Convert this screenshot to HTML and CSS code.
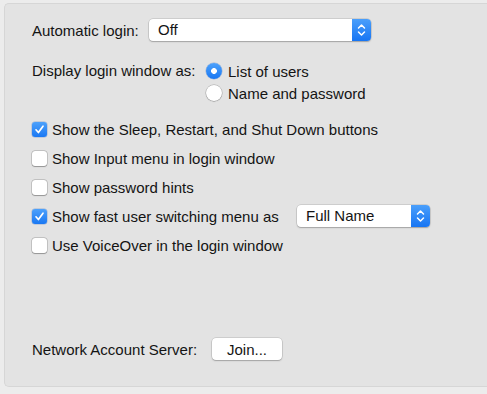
FILE: index.html
```html
<!DOCTYPE html>
<html lang="en">
<head>
    <meta charset="UTF-8">
    <meta name="viewport" content="width=device-width, initial-scale=1.0">
    <title>Login Options</title>
    <link rel="stylesheet" href="styles.css">
</head>
<body>

<div class="panel">
    <div class="row">
        <span class="label label-auto">Automatic login:</span>
        <div class="popup popup-wide">
            <span class="popup-text">Off</span>
            <span class="popup-arrows">
                <svg width="19" height="22" viewBox="0 0 19 22"><path d="M6.5 9 L9.5 6 L12.5 9 M6.5 13 L9.5 16 L12.5 13" fill="none" stroke="#fff" stroke-width="1.5" stroke-linecap="round" stroke-linejoin="round"/></svg>
            </span>
        </div>
    </div>

    <div class="row radio-block">
        <span class="label label-display">Display login window as:</span>
        <div class="radio-list">
            <div class="radio-row">
                <span class="radio radio-on"></span>
                <span>List of users</span>
            </div>
            <div class="radio-row">
                <span class="radio"></span>
                <span>Name and password</span>
            </div>
        </div>
    </div>

    <div class="checks">
        <div class="check-row">
            <span class="check check-on"><svg width="15" height="15" viewBox="0 0 15 15"><path d="M4 7.8 L6.4 10.5 L11 4.2" fill="none" stroke="#fff" stroke-width="1.7" stroke-linecap="round" stroke-linejoin="round"/></svg></span>
            <span>Show the Sleep, Restart, and Shut Down buttons</span>
        </div>
        <div class="check-row">
            <span class="check"></span>
            <span>Show Input menu in login window</span>
        </div>
        <div class="check-row">
            <span class="check"></span>
            <span>Show password hints</span>
        </div>
        <div class="check-row">
            <span class="check check-on"><svg width="15" height="15" viewBox="0 0 15 15"><path d="M4 7.8 L6.4 10.5 L11 4.2" fill="none" stroke="#fff" stroke-width="1.7" stroke-linecap="round" stroke-linejoin="round"/></svg></span>
            <span class="label-fast">Show fast user switching menu as</span>
            <div class="popup popup-name">
                <span class="popup-text">Full Name</span>
                <span class="popup-arrows">
                    <svg width="19" height="22" viewBox="0 0 19 22"><path d="M6.5 9 L9.5 6 L12.5 9 M6.5 13 L9.5 16 L12.5 13" fill="none" stroke="#fff" stroke-width="1.5" stroke-linecap="round" stroke-linejoin="round"/></svg>
                </span>
            </div>
        </div>
        <div class="check-row">
            <span class="check"></span>
            <span>Use VoiceOver in the login window</span>
        </div>
    </div>

    <div class="row network">
        <span class="label label-network">Network Account Server:</span>
        <button class="join">Join...</button>
    </div>
</div>

</body>
</html>
```

FILE: styles.css
```css
body {
    margin: 0;
    background-color: #ececec;
    font-family: "Liberation Sans", Arial, sans-serif;
    font-size: 15px;
    color: #141414;
    overflow: hidden;
}
.panel {
    margin: 3px 0 0 4px;
    height: 384px;
    box-sizing: border-box;
    background-color: #e3e3e3;
    border: 1px solid #d6d6d6;
    border-right: none;
    border-radius: 5px 0 0 5px;
    padding: 15px 0 26px 27px;
    display: flex;
    flex-direction: column;
}
.row {
    display: flex;
    align-items: center;
    height: 22px;
}
.label {
    margin-right: 8px;
}
.label-auto {
    width: 109px;
}
.popup {
    display: flex;
    height: 22px;
    box-sizing: border-box;
    background-color: #fff;
    border-radius: 4px;
    box-shadow: 0 0 0 0.5px rgba(0, 0, 0, 0.18), 0 1px 1.5px rgba(0, 0, 0, 0.22);
    overflow: hidden;
}
.popup-wide {
    width: 222px;
}
.popup-name {
    width: 133px;
    margin-left: auto;
}
.popup-text {
    flex: 1;
    padding-left: 9px;
    line-height: 22px;
}
.popup-arrows {
    width: 19px;
    height: 22px;
    background: linear-gradient(#4a9ffb, #1775f3);
}
.popup-arrows svg {
    display: block;
}
.radio-block {
    height: auto;
    align-items: flex-start;
    margin-top: 19px;
}
.label-display {
    line-height: 22px;
    width: 166px;
}
.radio-row {
    display: flex;
    align-items: center;
    height: 22px;
    gap: 6px;
}
.radio {
    width: 16px;
    height: 16px;
    box-sizing: border-box;
    border-radius: 50%;
    background-color: #fff;
    box-shadow: 0 0 0 0.5px rgba(0, 0, 0, 0.25), 0 0.5px 1px rgba(0, 0, 0, 0.25);
}
.radio-on {
    background: radial-gradient(circle, #fff 0, #fff 2.6px, transparent 3.2px), linear-gradient(#4da1fb, #1a78f3);
    box-shadow: 0 0 0 0.5px rgba(0, 60, 160, 0.3);
}
.checks {
    margin-top: 14px;
    display: flex;
    flex-direction: column;
    gap: 7px;
    width: 398px;
}
.check-row {
    display: flex;
    align-items: center;
    height: 22px;
    gap: 5px;
}
.check {
    width: 15px;
    height: 15px;
    box-sizing: border-box;
    border-radius: 3px;
    background-color: #fff;
    box-shadow: 0 0 0 0.5px rgba(0, 0, 0, 0.25), 0 0.5px 1px rgba(0, 0, 0, 0.25);
}
.check svg {
    display: block;
}
.check-on {
    background: linear-gradient(#4da1fb, #1a78f3);
    box-shadow: 0 0 0 0.5px rgba(0, 60, 160, 0.3);
}
.network {
    margin-top: auto;
}
.label-network {
    width: 172px;
}
.join {
    width: 70px;
    height: 22px;
    padding: 0;
    font-family: inherit;
    font-size: 15px;
    color: #141414;
    background-color: #fff;
    border: none;
    border-radius: 4px;
    box-shadow: 0 0 0 0.5px rgba(0, 0, 0, 0.18), 0 1px 1.5px rgba(0, 0, 0, 0.22);
}
```
